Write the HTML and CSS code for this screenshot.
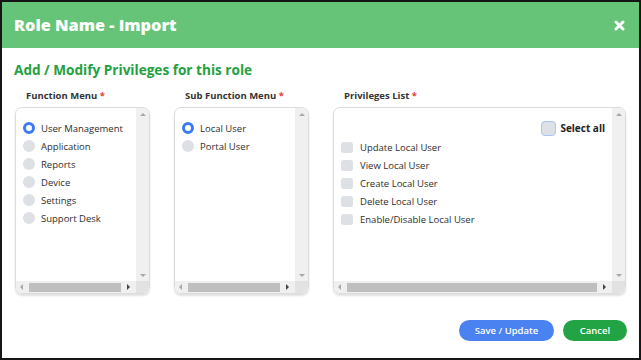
FILE: index.html
```html
<!DOCTYPE html>
<html>
<head>
<meta charset="utf-8">
<link rel="stylesheet" href="styles.css">
</head>
<body>
<div class="modal">
  <div class="header">
    <h1 class="title">Role Name - Import</h1>
    <svg class="close" width="11" height="11" viewBox="0 0 11 11"><path d="M2 2 L9 9 M9 2 L2 9" stroke="#fff" stroke-width="3" stroke-linecap="round"/></svg>
  </div>
  <div class="content">
    <h2 class="subtitle">Add / Modify Privileges for this role</h2>
    <div class="columns">
      <div class="col col-sm">
        <div class="label">Function Menu <span class="req">*</span></div>
        <div class="box">
          <div class="list">
            <div class="item"><span class="radio on"></span>User Management</div>
            <div class="item"><span class="radio"></span>Application</div>
            <div class="item"><span class="radio"></span>Reports</div>
            <div class="item"><span class="radio"></span>Device</div>
            <div class="item"><span class="radio"></span>Settings</div>
            <div class="item"><span class="radio"></span>Support Desk</div>
          </div>
          <div class="vbar"><span class="arr up"></span><span class="arr down"></span></div>
          <div class="hbar"><span class="arr left"></span><span class="thumb"></span><span class="arr right"></span></div>
          <div class="corner"></div>
        </div>
      </div>
      <div class="col col-sm">
        <div class="label">Sub Function Menu <span class="req">*</span></div>
        <div class="box">
          <div class="list">
            <div class="item"><span class="radio on"></span>Local User</div>
            <div class="item"><span class="radio"></span>Portal User</div>
          </div>
          <div class="vbar"><span class="arr up"></span><span class="arr down"></span></div>
          <div class="hbar"><span class="arr left"></span><span class="thumb"></span><span class="arr right"></span></div>
          <div class="corner"></div>
        </div>
      </div>
      <div class="col col-lg">
        <div class="label">Privileges List <span class="req">*</span></div>
        <div class="box">
          <div class="list">
            <div class="selall"><span class="check focus"></span>Select all</div>
            <div class="item"><span class="check"></span>Update Local User</div>
            <div class="item"><span class="check"></span>View Local User</div>
            <div class="item"><span class="check"></span>Create Local User</div>
            <div class="item"><span class="check"></span>Delete Local User</div>
            <div class="item"><span class="check"></span>Enable/Disable Local User</div>
          </div>
          <div class="vbar"><span class="arr up"></span><span class="arr down"></span></div>
          <div class="hbar"><span class="arr left"></span><span class="thumb"></span><span class="arr right"></span></div>
          <div class="corner"></div>
        </div>
      </div>
    </div>
    <div class="footer">
      <button class="btn btn-save">Save / Update</button>
      <button class="btn btn-cancel">Cancel</button>
    </div>
  </div>
</div>
</body>
</html>
```
FILE: styles.css
```css
* { box-sizing: border-box; }
html, body { margin: 0; padding: 0; background: #fff; }
body { font-family: "Open Sans", "Noto Sans", sans-serif; color: #333; }
.modal {
  width: 641px; height: 360px;
  border: 2px solid #161616;
  display: flex; flex-direction: column;
  background: #fff;
}
.header {
  height: 46px;
  background: #66c479;
  display: flex; align-items: center; justify-content: space-between;
  padding: 0 14px 0 12px;
}
.title {
  margin: 0; color: #fff;
  font-size: 16.3px; font-weight: 800; letter-spacing: 0;
}
.close { display: block; }
.content { flex: 1; display: flex; flex-direction: column; padding: 0 12px 0 13px; }
.subtitle {
  margin: 13px 0 0 -1px;
  color: #24a13f;
  font-size: 13.6px; font-weight: 700;
  line-height: 18px;
}
.columns { display: flex; gap: 24px; margin-top: 11px; }
.col-sm { width: 135px; }
.col-lg { width: 293px; }
.label {
  font-size: 9.5px; font-weight: 700; color: #333;
  padding-left: 11px; line-height: 12px; height: 12px;
}
.req { color: #e53935; }
.box {
  margin-top: 5px;
  height: 187px;
  border: 1px solid #dcdcdc;
  border-radius: 7px;
  box-shadow: 0 2px 2px rgba(0,0,0,0.12);
  display: grid;
  grid-template-columns: 1fr 13px;
  grid-template-rows: 1fr 12px;
  overflow: hidden;
}
.list { padding: 11px 0 0 7px; }
.item {
  display: flex; align-items: center; gap: 6px;
  height: 18px; font-size: 9.5px; color: #2d2d2d; white-space: nowrap;
}
.radio {
  width: 12px; height: 12px; border-radius: 50%;
  background: #dde0e5; flex: none;
}
.radio.on { background: #fff; border: 3.5px solid #3b7cf4; }
.check {
  width: 12px; height: 11px; border-radius: 3px;
  background: #dde0e5; flex: none;
}
.col-lg .list { padding-top: 5px; }
.selall {
  display: flex; align-items: center; justify-content: flex-end; gap: 4px;
  height: 16px; margin: 7px 7px 2px 0;
  font-size: 10px; font-weight: 700; color: #222;
}
.check.focus { width: 15px; height: 15px; border: 1px solid #a9c4f5; border-radius: 4px; }
.col-lg .item { gap: 7px; }
.vbar {
  background: #f0f0f0;
  display: flex; flex-direction: column; justify-content: space-between; align-items: center;
  padding: 5px 0 4px;
}
.hbar {
  background: #f0f0f0;
  display: flex; align-items: center; gap: 0;
  padding: 0 0 0 4px;
}
.corner { background: #e2e2e2; }
.arr { width: 0; height: 0; display: block; flex: none; }
.arr.up { border-left: 3px solid transparent; border-right: 3px solid transparent; border-bottom: 3px solid #a8a8a8; }
.arr.down { border-left: 3px solid transparent; border-right: 3px solid transparent; border-top: 3px solid #a8a8a8; }
.arr.left { border-top: 3px solid transparent; border-bottom: 3px solid transparent; border-right: 3px solid #a8a8a8; }
.arr.right { border-top: 3px solid transparent; border-bottom: 3px solid transparent; border-left: 3px solid #444; margin: 0 6px 0 6px; }
.thumb { flex: 1; height: 9px; background: #bfbfbf; margin-left: 6px; }
.footer {
  display: flex; justify-content: flex-end; gap: 9px;
  margin-top: 26px;
}
.btn {
  border: none; border-radius: 11px; height: 21px;
  font-family: inherit; font-size: 9.5px; font-weight: 600; color: #fff;
  padding: 0; cursor: pointer;
}
.btn-save { width: 95px; background: #4a82f2; }
.btn-cancel { width: 64px; background: #22a444; }
```
